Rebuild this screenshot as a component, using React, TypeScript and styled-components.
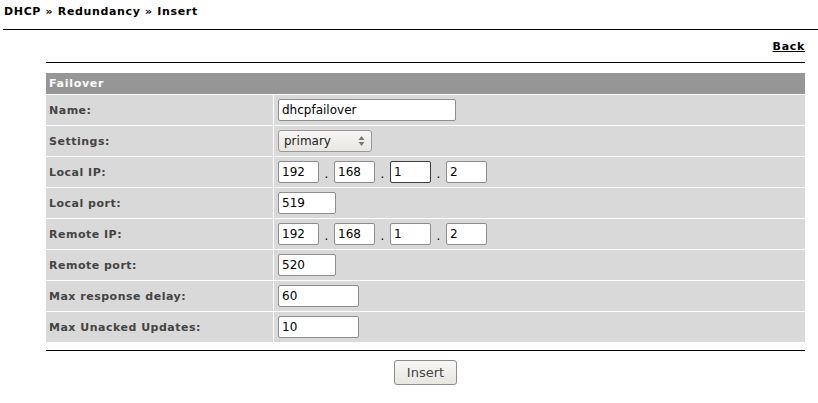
import React from 'react'
import styled, { createGlobalStyle, css } from 'styled-components'

const GlobalStyle = createGlobalStyle`
  html, body {
    margin: 0;
    padding: 0;
    background: #ffffff;
  }
  body {
    font-family: 'DejaVu Sans', Verdana, sans-serif;
    font-size: 11px;
    color: #000;
  }
`

const Page = styled.div`
  width: 818px;
`

const Crumbs = styled.div`
  margin-left: 3px;
  padding: 5px 0 0 1px;
  height: 24px;
  border-bottom: 1px solid #000;
  font-weight: bold;
  font-size: 11px;
  letter-spacing: 0.65px;
  color: #000;
`

const Section = styled.div`
  margin: 0 13px 0 46px;
  display: flex;
  flex-direction: column;
`

const Toolbar = styled.div`
  display: flex;
  justify-content: flex-end;
  padding-top: 10px;
  height: 22px;
  border-bottom: 1px solid #000;
`

const BackLink = styled.a`
  font-weight: bold;
  font-size: 11px;
  letter-spacing: 0.7px;
  color: #000;
  text-decoration: underline;
  cursor: pointer;
`

const Table = styled.div`
  margin-top: 10px;
  display: grid;
  grid-template-columns: 227px 1fr;
  column-gap: 1px;
  row-gap: 1px;
  background: #ffffff;
`

const HeadCell = styled.div`
  grid-column: 1 / span 2;
  height: 21px;
  background: #969696;
  color: #ffffff;
  font-weight: bold;
  letter-spacing: 0.7px;
  display: flex;
  align-items: center;
  padding-left: 3px;
`

const LabelCell = styled.div`
  height: 30px;
  background: #d9d9d9;
  color: #444444;
  font-weight: bold;
  letter-spacing: 0.5px;
  display: flex;
  align-items: center;
  padding-left: 3px;
`

const ValueCell = styled.div`
  height: 30px;
  background: #d9d9d9;
  display: flex;
  align-items: center;
  padding-left: 4px;
`

const TextBox = styled.input<{ $w: number; $focus?: boolean }>`
  box-sizing: border-box;
  width: ${({ $w }) => $w}px;
  height: 22px;
  margin: 0;
  padding: 0 3px;
  border: 1px solid #8e8e8e;
  border-radius: 2px;
  background: #ffffff;
  font-family: 'DejaVu Sans', sans-serif;
  font-size: 12px;
  color: #000;
  outline: none;
  ${({ $focus }) =>
    $focus &&
    css`
      border-color: #3c3c3c;
    `}
`

const SelectBox = styled.div`
  box-sizing: border-box;
  width: 94px;
  height: 22px;
  border: 1px solid #9a9a9a;
  border-radius: 3px;
  background: linear-gradient(#f7f6f4, #e9e7e2);
  display: flex;
  align-items: center;
  justify-content: space-between;
  padding: 0 6px 0 5px;
  font-size: 12px;
  color: #222;
`

const Arrows = styled.svg`
  width: 7px;
  height: 12px;
`

const IpRow = styled.div`
  display: flex;
  align-items: center;
`

const Dot = styled.span`
  width: 15px;
  text-align: center;
  font-size: 12px;
  color: #000;
  padding-top: 4px;
`

const Footer = styled.div`
  margin-top: 8px;
  border-top: 1px solid #000;
  display: flex;
  justify-content: center;
  padding-top: 9px;
`

const Button = styled.button`
  box-sizing: border-box;
  width: 63px;
  height: 25px;
  border: 1px solid #8c8c8c;
  border-radius: 3px;
  background: linear-gradient(#f8f7f5, #e8e6e1);
  font-family: 'DejaVu Sans', sans-serif;
  font-size: 13px;
  color: #444;
  padding: 0;
`

const Ip: React.FC<{ parts: string[]; focusIndex?: number }> = ({
  parts,
  focusIndex,
}) => (
  <IpRow>
    {parts.map((p, i) => (
      <React.Fragment key={i}>
        {i > 0 && <Dot>.</Dot>}
        <TextBox $w={41} $focus={i === focusIndex} defaultValue={p} />
      </React.Fragment>
    ))}
  </IpRow>
)

export default function App() {
  return (
    <Page>
      <GlobalStyle />
      <Crumbs>DHCP » Redundancy » Insert</Crumbs>
      <Section>
        <Toolbar>
          <BackLink>Back</BackLink>
        </Toolbar>
        <Table>
          <HeadCell>Failover</HeadCell>

          <LabelCell>Name:</LabelCell>
          <ValueCell>
            <TextBox $w={178} defaultValue="dhcpfailover" />
          </ValueCell>

          <LabelCell>Settings:</LabelCell>
          <ValueCell>
            <SelectBox>
              <span>primary</span>
              <Arrows viewBox="0 0 7 12">
                <path d="M3.5 1 L6.5 5 L0.5 5 Z" fill="#777" />
                <path d="M3.5 11 L6.5 7 L0.5 7 Z" fill="#777" />
              </Arrows>
            </SelectBox>
          </ValueCell>

          <LabelCell>Local IP:</LabelCell>
          <ValueCell>
            <Ip parts={['192', '168', '1', '2']} focusIndex={2} />
          </ValueCell>

          <LabelCell>Local port:</LabelCell>
          <ValueCell>
            <TextBox $w={58} defaultValue="519" />
          </ValueCell>

          <LabelCell>Remote IP:</LabelCell>
          <ValueCell>
            <Ip parts={['192', '168', '1', '2']} />
          </ValueCell>

          <LabelCell>Remote port:</LabelCell>
          <ValueCell>
            <TextBox $w={58} defaultValue="520" />
          </ValueCell>

          <LabelCell>Max response delay:</LabelCell>
          <ValueCell>
            <TextBox $w={81} defaultValue="60" />
          </ValueCell>

          <LabelCell>Max Unacked Updates:</LabelCell>
          <ValueCell>
            <TextBox $w={81} defaultValue="10" />
          </ValueCell>
        </Table>
        <Footer>
          <Button>Insert</Button>
        </Footer>
      </Section>
    </Page>
  )
}
